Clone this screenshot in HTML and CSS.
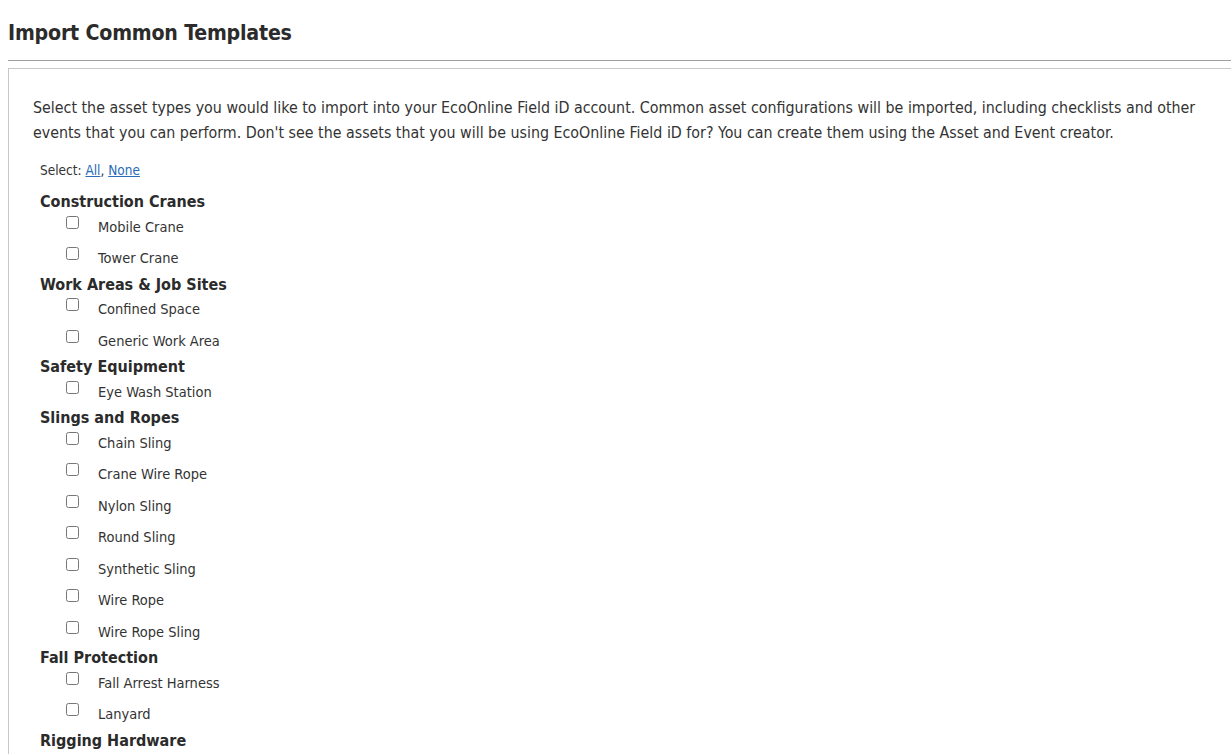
FILE: index.html
```html
<!DOCTYPE html>
<html lang="en">
<head>
    <meta charset="UTF-8">
    <title>Import Common Templates</title>
    <link rel="stylesheet" href="styles.css">
</head>
<body>
    <div class="page">
        <h1 class="page-title">Import Common Templates</h1>
        <hr class="title-rule">

        <div class="panel">
            <p class="intro">Select the asset types you would like to import into your EcoOnline Field iD account. Common asset configurations will be imported, including checklists and other events that you can perform. Don't see the assets that you will be using EcoOnline Field iD for? You can create them using the Asset and Event creator.</p>

            <div class="select-links">Select: <a href="#">All</a>, <a href="#">None</a></div>

            <div class="group">
                <div class="group-title">Construction Cranes</div>
                <label class="item"><input type="checkbox"><span>Mobile Crane</span></label>
                <label class="item"><input type="checkbox"><span>Tower Crane</span></label>
            </div>

            <div class="group">
                <div class="group-title">Work Areas &amp; Job Sites</div>
                <label class="item"><input type="checkbox"><span>Confined Space</span></label>
                <label class="item"><input type="checkbox"><span>Generic Work Area</span></label>
            </div>

            <div class="group">
                <div class="group-title">Safety Equipment</div>
                <label class="item"><input type="checkbox"><span>Eye Wash Station</span></label>
            </div>

            <div class="group">
                <div class="group-title">Slings and Ropes</div>
                <label class="item"><input type="checkbox"><span>Chain Sling</span></label>
                <label class="item"><input type="checkbox"><span>Crane Wire Rope</span></label>
                <label class="item"><input type="checkbox"><span>Nylon Sling</span></label>
                <label class="item"><input type="checkbox"><span>Round Sling</span></label>
                <label class="item"><input type="checkbox"><span>Synthetic Sling</span></label>
                <label class="item"><input type="checkbox"><span>Wire Rope</span></label>
                <label class="item"><input type="checkbox"><span>Wire Rope Sling</span></label>
            </div>

            <div class="group">
                <div class="group-title">Fall Protection</div>
                <label class="item"><input type="checkbox"><span>Fall Arrest Harness</span></label>
                <label class="item"><input type="checkbox"><span>Lanyard</span></label>
            </div>

            <div class="group">
                <div class="group-title">Rigging Hardware</div>
            </div>
        </div>
    </div>
</body>
</html>
```

FILE: styles.css
```css
:root {
    --text-color: #333333;
    --heading-color: #2b2b2b;
    --link-color: #2a6cb8;
    --rule-color: #a0a0a0;
    --panel-border: #c8c8c8;
}

html, body {
    margin: 0;
    padding: 0;
    background: white;
    overflow: hidden;
}

body {
    font-family: "DejaVu Sans Condensed", "DejaVu Sans", sans-serif;
    color: var(--text-color);
}

.page {
    padding-left: 8px;
}

.page-title {
    margin: 0;
    padding-top: 20px;
    font-size: 21.2px;
    line-height: 25px;
    font-weight: bold;
    color: var(--heading-color);
    letter-spacing: -0.2px;
}

.title-rule {
    margin: 15px 0 0;
    border: none;
    border-top: 1px solid var(--rule-color);
    height: 0;
}

.panel {
    margin-top: 7px;
    margin-right: -4px;
    border: 1px solid var(--panel-border);
    padding: 26px 24px 20px;
}

.intro {
    margin: 0;
    font-size: 15.85px;
    line-height: 25px;
}

.select-links {
    margin: 15px 0 0 7px;
    font-size: 13.5px;
    line-height: 20px;
}

.select-links a {
    color: var(--link-color);
}

.group {
    margin-left: 7px;
}

.select-links + .group {
    margin-top: 11px;
}

.group-title {
    padding-top: 3px;
    font-size: 16px;
    font-weight: bold;
    line-height: 16.5px;
    color: var(--heading-color);
}

.item {
    display: flex;
    align-items: flex-start;
    height: 31.5px;
    padding-left: 26px;
    font-size: 14.5px;
}

.item input {
    margin: 5px 19px 0 0;
    width: 13px;
    height: 13px;
}

.item span {
    margin-top: 8px;
    line-height: 17px;
}
```
